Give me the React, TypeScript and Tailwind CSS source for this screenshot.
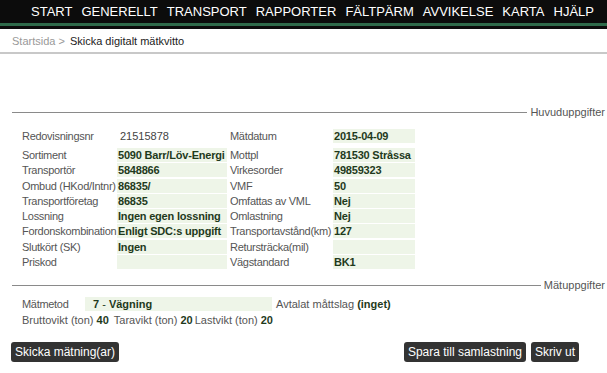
const NAV = ['START', 'GENERELLT', 'TRANSPORT', 'RAPPORTER', 'FÄLTPÄRM', 'AVVIKELSE', 'KARTA', 'HJÄLP']

type Cell = { label: string; value: string }

const ROWS: [Cell, Cell][] = [
  [{ label: 'Sortiment', value: '5090 Barr/Löv-Energi' }, { label: 'Mottpl', value: '781530 Stråssa' }],
  [{ label: 'Transportör', value: '5848866' }, { label: 'Virkesorder', value: '49859323' }],
  [{ label: 'Ombud (HKod/Intnr)', value: '86835/' }, { label: 'VMF', value: '50' }],
  [{ label: 'Transportföretag', value: '86835' }, { label: 'Omfattas av VML', value: 'Nej' }],
  [{ label: 'Lossning', value: 'Ingen egen lossning' }, { label: 'Omlastning', value: 'Nej' }],
  [{ label: 'Fordonskombination', value: 'Enligt SDC:s uppgift' }, { label: 'Transportavstånd(km)', value: '127' }],
  [{ label: 'Slutkört (SK)', value: 'Ingen' }, { label: 'Retursträcka(mil)', value: '' }],
  [{ label: 'Priskod', value: '' }, { label: 'Vägstandard', value: 'BK1' }],
]

function Legend({ title }: { title: string }) {
  return (
    <div className="flex items-center">
      <div className="flex-1 h-px bg-[#8a8a8a] ml-[12px]" />
      <span className="shrink-0 pl-[3px] pr-[2px] text-[11px] text-[#555] leading-none">{title}</span>
    </div>
  )
}

function Label({ children, w }: { children: React.ReactNode; w: string }) {
  return <div className={`${w} shrink-0 text-[#555] whitespace-nowrap tracking-[-0.3px]`}>{children}</div>
}

function Value({ children, w }: { children: React.ReactNode; w: string }) {
  return (
    <div className={`${w} shrink-0 bg-[#eef5e8] pl-[1px] font-bold text-[#1f3a1c] whitespace-nowrap tracking-[-0.2px]`}>
      {children || '\u00a0'}
    </div>
  )
}

function Btn({ children }: { children: React.ReactNode }) {
  return (
    <button className="h-[20px] px-[4px] bg-[#333] text-white text-[12px] rounded-[3px] leading-none">
      {children}
    </button>
  )
}

export default function App() {
  return (
    <div className="w-[607px] h-[373px] bg-white overflow-hidden font-['Liberation_Sans',Arial,sans-serif]">
      {/* Top nav */}
      <div className="bg-[#0c0c0c]">
        <div className="h-[23px] flex items-center pl-[31px] gap-[9px] text-white text-[13px] leading-none">
          {NAV.map((n) => (
            <span key={n}>{n}</span>
          ))}
        </div>
        <div className="h-[3px] bg-[#2f6b4b]" />
        <div className="h-[3px]" />
      </div>

      {/* Breadcrumb */}
      <div className="h-[24px] flex items-center pl-[12px] text-[11px] border-b-2 border-[#c8c8c8] mt-[1px]">
        <span className="text-[#999]">Startsida &gt;</span>
        <span className="ml-[5px] text-[#222]">Skicka digitalt mätkvitto</span>
      </div>

      {/* Huvuduppgifter */}
      <div className="mt-[53px]">
        <Legend title="Huvuduppgifter" />
      </div>

      <div className="pl-[22px] mt-[11px] text-[11px] leading-[14px]">
        <div className="flex mb-[5px]">
          <Label w="w-[95px]">Redovisningsnr</Label>
          <div className="w-[113px] shrink-0 pl-[3px] text-[#444]">21515878</div>
          <Label w="w-[103px]">Mätdatum</Label>
          <Value w="w-[82px]">2015-04-09</Value>
        </div>
        {ROWS.map(([a, b]) => (
          <div key={a.label} className="flex mb-[1.3px]">
            <Label w="w-[95px]">{a.label}</Label>
            <Value w="w-[110px]">{a.value}</Value>
            <div className="w-[3px] shrink-0" />
            <Label w="w-[103px]">{b.label}</Label>
            <Value w="w-[82px]">{b.value}</Value>
          </div>
        ))}
      </div>

      {/* Mätuppgifter */}
      <div className="mt-[11px]">
        <Legend title="Mätuppgifter" />
      </div>

      <div className="pl-[22px] mt-[6px] text-[11px] leading-[14px]">
        <div className="flex">
          <Label w="w-[63px]">Mätmetod</Label>
          <div className="w-[187px] shrink-0 bg-[#eef5e8] pl-[8px] text-[#1f3a1c] whitespace-nowrap">
            <span className="font-bold">7</span> - <span className="font-bold">Vägning</span>
          </div>
          <div className="pl-[4px] text-[#555] whitespace-nowrap">
            Avtalat måttslag <span className="font-bold text-[#1f3a1c]">(inget)</span>
          </div>
        </div>
        <div className="mt-[2px] text-[#555] whitespace-nowrap">
          Bruttovikt (ton) <span className="font-bold text-[#1f3a1c]">40</span>
          <span className="ml-[5px]">Taravikt (ton)</span> <span className="font-bold text-[#1f3a1c]">20</span>
          <span className="ml-[2px]">Lastvikt (ton)</span> <span className="font-bold text-[#1f3a1c]">20</span>
        </div>
      </div>

      {/* Actions */}
      <div className="flex items-center mt-[15px] pl-[11px] pr-[28px]">
        <Btn>Skicka mätning(ar)</Btn>
        <div className="flex-1" />
        <div className="flex gap-[5px]">
          <Btn>Spara till samlastning</Btn>
          <Btn>Skriv ut</Btn>
        </div>
      </div>
    </div>
  )
}
